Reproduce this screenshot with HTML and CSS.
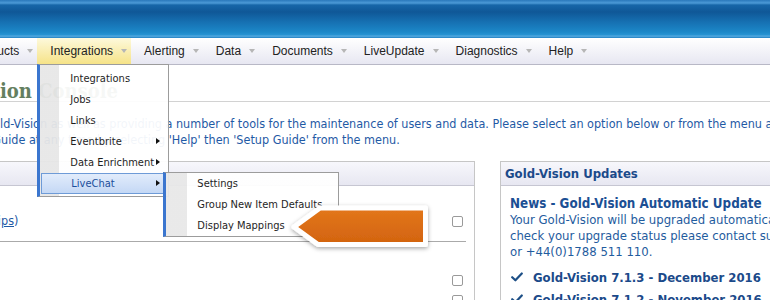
FILE: index.html
```html
<!DOCTYPE html>
<html>
<head>
<meta charset="utf-8">
<title>Gold-Vision Admin</title>
<link rel="stylesheet" href="styles.css">
</head>
<body>
<div class="page">
  <header class="topbar"></header>
  <nav class="menubar">
    <ul class="menu">
      <li class="mi"><span>Products</span><i class="caret"></i></li>
      <li class="mi active"><span>Integrations</span><i class="caret"></i>
        <div class="dropdown">
          <div class="dd-item">Integrations</div>
          <div class="dd-item">Jobs</div>
          <div class="dd-item">Links</div>
          <div class="dd-item has-sub">Eventbrite<i class="tri"></i></div>
          <div class="dd-item has-sub">Data Enrichment<i class="tri"></i></div>
          <div class="dd-item has-sub hover">LiveChat<i class="tri"></i></div>
          <div class="submenu">
            <div class="sub-item">Settings</div>
            <div class="sub-item">Group New Item Defaults</div>
            <div class="sub-item">Display Mappings</div>
          </div>
        </div>
      </li>
      <li class="mi"><span>Alerting</span><i class="caret"></i></li>
      <li class="mi"><span>Data</span><i class="caret"></i></li>
      <li class="mi"><span>Documents</span><i class="caret"></i></li>
      <li class="mi"><span>LiveUpdate</span><i class="caret"></i></li>
      <li class="mi"><span>Diagnostics</span><i class="caret"></i></li>
      <li class="mi"><span>Help</span><i class="caret"></i></li>
    </ul>
  </nav>

  <main class="content">
    <h1 class="title"><span class="pre">Administrat</span>ion Console</h1>
    <div class="intro">
      <div class="line l1"><span class="pre">The Administration Console allows you to configure Go</span>ld-Vision as well as providing a number of tools for the maintenance of users and data. Please select an option below or from the menu above.</div>
      <div class="line l2"><span class="pre">You can view the Setup G</span>uide at any time by selecting 'Help' then 'Setup Guide' from the menu.</div>
    </div>

    <div class="panels">
      <section class="panel panel-left">
        <div class="panel-head"></div>
        <div class="row row1">
          <span class="row-text"><span class="pre">Getting started guide (ti</span><a class="link" href="#">ps</a>)</span>
          <span class="checkbox"></span>
        </div>
        <div class="row row2"><span class="checkbox"></span></div>
        <div class="row row3"><span class="checkbox"></span></div>
      </section>

      <section class="panel panel-right">
        <div class="panel-head"><h2>Gold-Vision Updates</h2></div>
        <div class="news">
          <h3>News - Gold-Vision Automatic Update</h3>
          <p>Your Gold-Vision will be upgraded automatically to the latest version. To<br>check your upgrade status please contact support@gold-vision.com<br>or +44(0)1788 511 110.</p>
          <ul class="releases">
            <li><svg class="check" viewBox="0 0 12 10" width="12" height="10"><path d="M1.2 5.2 L4.4 8.3 L10.8 1.5" fill="none" stroke="#1d4f86" stroke-width="2.2" stroke-linecap="round" stroke-linejoin="round"/></svg><span>Gold-Vision 7.1.3 - December 2016</span></li>
            <li><svg class="check" viewBox="0 0 12 10" width="12" height="10"><path d="M1.2 5.2 L4.4 8.3 L10.8 1.5" fill="none" stroke="#1d4f86" stroke-width="2.2" stroke-linecap="round" stroke-linejoin="round"/></svg><span>Gold-Vision 7.1.2 - November 2016</span></li>
          </ul>
        </div>
      </section>
    </div>
  </main>

  <svg class="callout" viewBox="0 0 146 52" width="146" height="52">
    <defs>
      <linearGradient id="og" x1="0" y1="0" x2="0" y2="1">
        <stop offset="0" stop-color="#e3771b"/>
        <stop offset="1" stop-color="#d2630f"/>
      </linearGradient>
      <filter id="sh" x="-15%" y="-30%" width="135%" height="170%">
        <feDropShadow dx="0" dy="1.5" stdDeviation="2" flood-color="#000" flood-opacity="0.35"/>
      </filter>
    </defs>
    <polygon points="6,25 32,6 137.5,6 137.5,42.5 30,42.5" fill="url(#og)" stroke="#ffffff" stroke-width="5" stroke-linejoin="round" filter="url(#sh)"/>
  </svg>
</div>
</body>
</html>
```

FILE: styles.css
```css
* { box-sizing: border-box; margin: 0; padding: 0; }
html, body { width: 770px; height: 300px; overflow: hidden; background: #fff; }
body {
  font-family: "DejaVu Sans Condensed", "DejaVu Sans", sans-serif;
  font-stretch: condensed;
}
.page { position: relative; width: 770px; height: 300px; overflow: hidden; }

/* rtl prefix trick: text hidden off the left edge */
.pre {
  display: inline-block;
  width: 0;
  direction: rtl;
  white-space: nowrap;
}

.topbar {
  height: 38px;
  background: linear-gradient(to bottom,
    #2a78bb 0, #4c9ad7 3px, #1766a8 5px, #0f5797 12px,
    #1670b2 22px, #1c88c8 32px, #2794d3 35px, #58ace1 36px, #1e80c2 38px);
}

.menubar {
  height: 27px;
  background: linear-gradient(#ffffff, #e7e7f2);
  border-bottom: 1px solid #b8b8c6;
}
.menu {
  display: flex;
  list-style: none;
  margin-left: -41px;
  height: 26px;
  font-family: "Liberation Sans", Arial, sans-serif;
  font-size: 12px;
  color: #222;
}
.mi {
  position: relative;
  display: flex;
  align-items: center;
  height: 26px;
  padding: 0 4px 0 13px;
  white-space: nowrap;
}
.mi.active { background: linear-gradient(#fdf9dc, #f6e388); }
.caret {
  width: 0; height: 0;
  border-left: 3px solid transparent;
  border-right: 3px solid transparent;
  border-top: 4px solid #b6b6b6;
  margin-left: 8px;
}

.dropdown {
  position: absolute;
  left: 0;
  top: 26px;
  width: 132px;
  padding: 3px 0 2px 0;
  background: linear-gradient(to right, rgba(231,231,231,0.95) 0, rgba(231,231,231,0.95) 19px, rgba(255,255,255,0.94) 19px);
  border: 1px solid #9c9c9c;
  border-left: 3px solid #3b76cf;
  font-family: "DejaVu Sans Condensed", "DejaVu Sans", sans-serif;
  font-stretch: condensed;
  font-size: 11px;
  color: #1e1e1e;
  z-index: 5;
}
.dd-item {
  position: relative;
  height: 21px;
  line-height: 21px;
  padding-left: 30px;
}
.dd-item .tri {
  position: absolute;
  right: 8px;
  top: 7px;
  width: 0; height: 0;
  border-top: 3.5px solid transparent;
  border-bottom: 3.5px solid transparent;
  border-left: 4px solid #111;
}
.dd-item.hover {
  margin: 0 4px 0 1px;
  padding-left: 29px;
  line-height: 19px;
  border: 1px solid #6e9bd7;
  background: linear-gradient(#e2ecfb, #c4d8f5);
  color: #1c4f9c;
}
.dd-item.hover .tri { right: 3px; top: 6px; }

.submenu {
  position: absolute;
  left: 123px;
  top: 107px;
  width: 176px;
  background: linear-gradient(to right, rgba(232,232,232,0.95) 0, rgba(232,232,232,0.95) 21px, rgba(255,255,255,0.94) 21px);
  border: 1px solid #9c9c9c;
  border-left: 3px solid #3b76cf;
  z-index: 6;
}
.sub-item {
  height: 21px;
  line-height: 21px;
  padding-left: 31px;
  white-space: nowrap;
}

.content { font-size: 12.5px; }
.title {
  height: 37px;
  padding-top: 14px;
  font-family: "DejaVu Serif", Georgia, serif;
  font-weight: bold;
  font-size: 20px;
  line-height: 24px;
  color: #647f60;
  border-bottom: 1px solid #d2d2d2;
  white-space: nowrap;
}

.intro { margin-top: 14px; color: #1f5aa5; }
.line { white-space: nowrap; line-height: 16px; height: 16px; }
.l1 { padding-left: 0; }
.l2 { padding-left: 1px; }

.panels {
  display: flex;
  gap: 25px;
  margin-top: 13px;
  margin-left: -10px;
}
.panel {
  flex: none;
  border: 1px solid #c6c6c6;
  height: 160px;
}
.panel-left { width: 485px; }
.panel-right { width: 300px; }
.panel-head {
  height: 24px;
  background: linear-gradient(#f7f7fc, #e7e7f1);
  border-bottom: 1px solid #c6c6d2;
  padding-left: 4px;
}
.panel-head h2 {
  font-size: 13px;
  line-height: 23px;
  font-weight: bold;
  color: #1b4a8a;
  white-space: nowrap;
}

.row {
  display: flex;
  justify-content: space-between;
  align-items: flex-start;
  margin-right: 8px;
  padding-left: 10px;
  padding-right: 3px;
}
.row1 {
  height: 56px;
  padding-top: 27px;
  border-bottom: 1px solid #aaaaaa;
}
.row-text { color: #1f5aa5; line-height: 16px; white-space: nowrap; }
.link { color: #1f5aa5; text-decoration: underline; }
.checkbox {
  display: block;
  width: 11px;
  height: 11px;
  border: 1px solid #9a9a9a;
  border-radius: 2px;
  background: #fff;
}
.row1 .checkbox { margin-top: 3px; }
.row2 { justify-content: flex-end; padding-top: 33px; }
.row3 { justify-content: flex-end; padding-top: 9px; }

.news {
  padding: 10px 0 0 9px;
  color: #1f5c9e;
  white-space: nowrap;
}
.news h3 {
  font-size: 13.3px;
  font-weight: bold;
  line-height: 16px;
  color: #1b4f94;
}
.news p { font-size: 13px; line-height: 16px; }
.releases { list-style: none; margin-top: 6px; }
.releases li {
  display: flex;
  align-items: center;
  height: 22px;
  font-size: 13px;
  font-weight: bold;
  color: #1b4a8a;
}
.check { flex: none; margin: 0 10px 0 1px; }

.callout {
  position: absolute;
  left: 288px;
  top: 202px;
  z-index: 10;
}
```
